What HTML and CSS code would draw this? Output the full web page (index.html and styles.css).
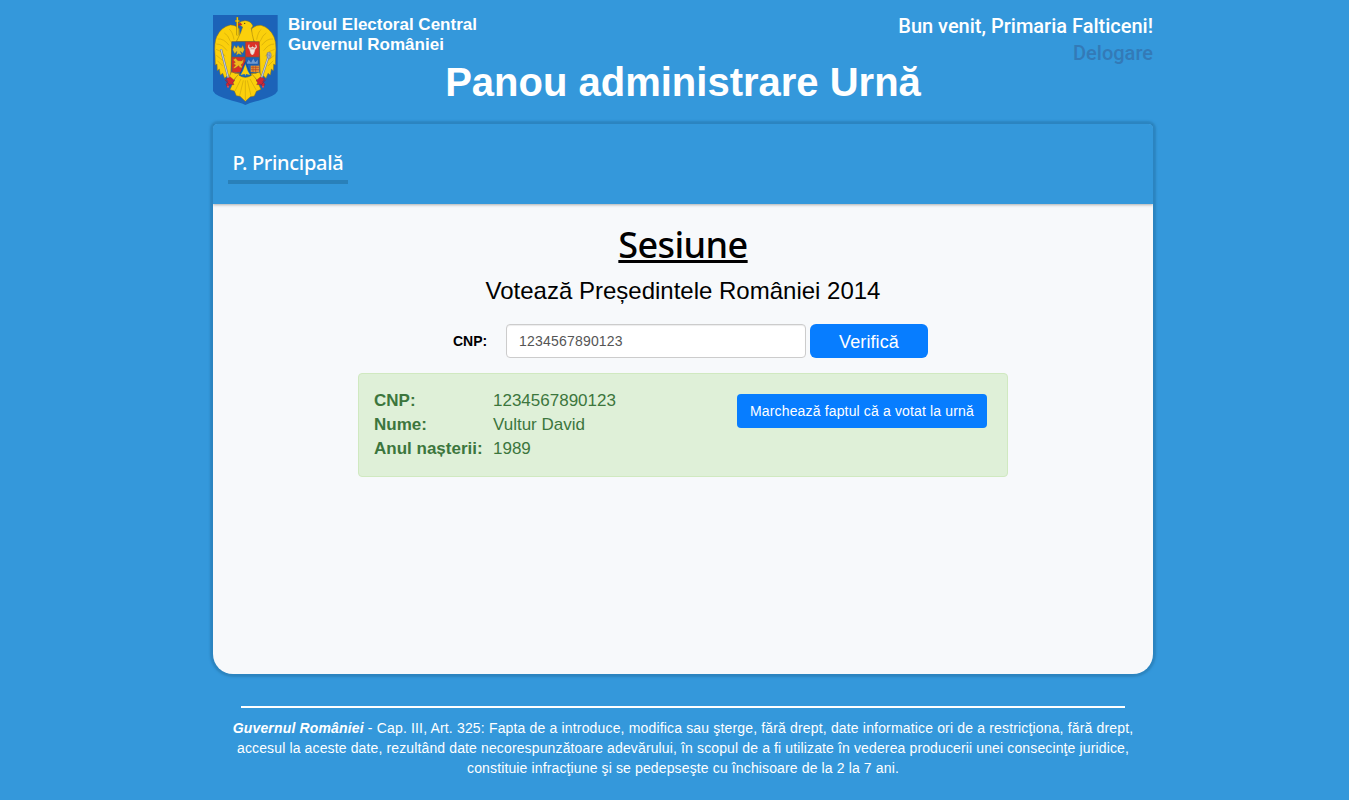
FILE: index.html
```html
<!DOCTYPE html>
<html lang="ro">
<head>
<meta charset="utf-8">
<title>Panou administrare Urnă</title>
<link rel="stylesheet" href="styles.css">
</head>
<body>
<div class="page">
  <header class="header">
    <svg class="crest" viewBox="24 21 195 270" aria-label="Stema României">
      <path d="M24 21H218V249Q211 265 160 278Q135 283 121 291Q107 283 82 278Q31 265 24 249Z" fill="#1c63b8"/>
      <g fill="#fbd00b" stroke="#94750e" stroke-width="1.5" stroke-linejoin="round">
        <path d="M103 62Q90 50 76 51Q48 57 35 86Q27 105 30 139L31 171L36 168L37 188L43 183L46 201L53 196L59 211L67 203L77 207L80 116L105 88Z"/>
        <path d="M140 62Q153 50 168 52Q194 59 207 87Q215 106 212 139L211 171L206 168L205 188L199 183L196 201L189 196L183 211L175 203L166 207L163 116L138 88Z"/>
        <path d="M99 47Q109 37 121 38Q138 39 144 54L139 61L142 80L147 101H94L107 74L113 57Z"/>
        <path d="M97 196L75 245L88 249L94 263L105 265L121 280L136 266L148 264L154 250L168 244L145 196Z"/>
        <path d="M79 192L69 214L82 221L103 196ZM163 192L173 214L160 221L139 196Z"/>
      </g>
      <g fill="none" stroke="#b18a0b" stroke-width="1.2">
        <path d="M38 93Q57 91 72 112M34 108Q52 108 66 128M33 124Q49 126 61 145M34 142L54 158M37 158L53 174M58 75Q68 79 77 101M73 64Q83 71 87 95M204 93Q185 91 170 112M208 108Q190 108 176 128M209 124Q193 126 181 145M208 142L188 158M205 158L189 174M184 75Q174 79 165 101M169 64Q159 71 155 95"/>
        <path d="M108 213L90 249M115 217L104 263M121 217V276M127 217L138 263M135 213L154 247"/>
      </g>
      <path d="M94 49L107 44L112 50L101 53Z" fill="#c62b27"/>
      <circle cx="119" cy="46" r="2" fill="#3d3418"/>
      <path d="M97 27V82M90 39H104" fill="none" stroke="#8e7413" stroke-width="6"/>
      <path d="M97 28V81M91 39H103" fill="none" stroke="#fbd00b" stroke-width="3.5"/>
      <path d="M80 101H121V147H80Z" fill="#1763bd"/>
      <path d="M121 101H163V147H121Z" fill="#dc3028"/>
      <path d="M80 147H121V193H80Z" fill="#d92e27"/>
      <path d="M121 147H163V193H121Z" fill="#1763bd"/>
      <path d="M80 101H163V178Q163 191 154 196H132L121 205L110 196H89Q80 191 80 178ZM80 147H163M121 101V197" fill="none" stroke="#755b37" stroke-width="2"/>
      <path d="M99 112L103 118L109 120L113 112L118 125L113 136L106 130L110 141L101 137L94 142L96 130L89 137L83 125L88 112L94 120Z" fill="#e5bf22" stroke="#735f2e"/>
      <path d="M132 110Q127 120 135 124L139 121L146 121L150 124Q158 119 152 110L154 118L147 120L143 116L138 120L131 117ZM134 124H150L146 137L142 141L138 137Z" fill="#eee6df" stroke="#e6d5cf" stroke-width="2"/>
      <path d="M84 155L92 151L99 158L110 159L116 152L114 165L108 170L113 179H105L101 173L90 181H84L92 171L85 168L91 163Z" fill="#f1b71d" stroke="#7e5322"/>
      <path d="M125 164L131 154L138 163L145 150L151 162L159 154V168H125Z" fill="#6f9bd0" stroke="#183e83"/>
      <path d="M137 173H163V192H137Z" fill="#e39431"/>
      <path d="M138 178H162M138 185H162M144 173V192M152 173V192" stroke="#b74226" stroke-width="2"/>
      <path d="M121 161L103 202Q121 213 139 202Z" fill="#1769bd" stroke="#174485" stroke-width="2"/>
      <path d="M121 169L114 188L107 201L119 198L121 204L123 198L135 201L128 188Z" fill="#fbd00b"/>
      <path d="M48 124L71 214M190 147L168 214" fill="none" stroke="#66738b" stroke-width="6"/>
      <path d="M48 124L71 214M190 147L168 214" fill="none" stroke="#c4cbd5" stroke-width="3.5"/>
      <ellipse cx="192" cy="142" rx="7" ry="10" fill="#a8afba" stroke="#545e70"/>
      <path d="M186 139L198 145M188 134V149M194 133V151" stroke="#687286"/>
      <path d="M63 212L76 207L89 218L83 223L87 230L74 229L67 238L63 228L69 222ZM179 212L166 207L153 218L159 223L155 230L168 229L175 238L180 228L173 222Z" fill="#d12632" stroke="#75233b"/>
      <path d="M60 215L75 233M182 215L167 233" stroke="#8b2742" stroke-width="3"/>
      <circle cx="69" cy="236" r="3" fill="#e24b4f"/><circle cx="174" cy="236" r="3" fill="#e24b4f"/>
    </svg>
    <div class="org">Biroul Electoral Central<br>Guvernul României</div>
    <div class="user"><div>Bun venit, Primaria Falticeni!</div><a class="logout">Delogare</a></div>
    <h1 class="title">Panou administrare Urnă</h1>
  </header>
  <main class="panel">
    <nav class="nav"><a class="nav-link"><span class="nav-text">P. Principală</span></a></nav>
    <section class="content">
      <h2 class="heading"><span class="heading-text">Sesiune</span></h2>
      <p class="subtitle">Votează Președintele României 2014</p>
      <form class="search">
        <label class="label" for="cnp">CNP:</label>
        <input class="input" id="cnp" value="1234567890123">
        <button class="verify" type="button">Verifică</button>
      </form>
      <div class="result">
        <dl class="details">
          <dt>CNP:</dt><dd>1234567890123</dd>
          <dt>Nume:</dt><dd>Vultur David</dd>
          <dt>Anul nașterii:</dt><dd>1989</dd>
        </dl>
        <button class="mark" type="button">Marchează faptul că a votat la urnă</button>
      </div>
    </section>
  </main>
  <footer class="footer">
    <div class="legal legal-first"><strong><em>Guvernul României</em></strong> - Cap. III, Art. 325: Fapta de a introduce, modifica sau şterge, fără drept, date informatice ori de a restricţiona, fără drept,</div>
    <div class="legal">accesul la aceste date, rezultând date necorespunzătoare adevărului, în scopul de a fi utilizate în vederea producerii unei consecinţe juridice,</div>
    <div class="legal">constituie infracţiune şi se pedepseşte cu închisoare de la 2 la 7 ani.</div>
  </footer>
</div>
</body>
</html>
```
FILE: styles.css
```css
* { box-sizing: border-box; }
body { margin: 0; background: #3498db; color: #000; font: 14px/20px "Liberation Sans", Arial, sans-serif; }
.page { width: 940px; height: 800px; margin-left: 213px; }
.header { height: 124px; padding-top: 15px; display: grid; grid-template-columns: 65px 1fr auto; grid-template-rows: 45px 64px; column-gap: 10px; color: #fff; }
.crest { width: 65px; height: 90px; grid-column: 1; grid-row: 1 / 3; }
.org { font-size: 17px; font-weight: bold; line-height: 20px; grid-column: 2; grid-row: 1; white-space: nowrap; }
.user { font: 500 20px/27px Roboto, sans-serif; text-align: right; grid-column: 3; grid-row: 1; margin-top: -2px; white-space: nowrap; }
.logout { color: #337ab7; }
.title { grid-column: 1 / 4; grid-row: 2; margin: 0; text-align: center; font-size: 40px; line-height: 45px; }
.panel { height: 550px; border-radius: 5px 5px 20px 20px; background: #f7f9fb; box-shadow: 0 0 2px 3px rgba(41,128,185,.8); }
.nav { height: 80px; background: #3498db; border-radius: 4px 4px 0 0; padding: 21px 15px 0; box-shadow: 0 1px 3px rgba(0,0,0,.3); clip-path: inset(0 0 -5px 0); }
.nav-link { display: flex; width: 120px; height: 39px; border-bottom: 4px solid #2980b9; justify-content: center; color: #fff; }
.nav-text { font: 500 20px/36px "Noto Sans", sans-serif; letter-spacing: -.3px; white-space: nowrap; }
.content { padding-top: 21px; }
.heading { margin: 0; text-align: center; font: 550 36px/40px "Noto Sans", sans-serif; }
.heading-text { letter-spacing: -.6px; text-decoration: underline; text-decoration-thickness: 3px; text-underline-offset: 2px; text-decoration-skip-ink: none; }
.subtitle { margin: 11px 0 18px; font-size: 24px; line-height: 30px; text-align: center; }
.search { display: flex; align-items: center; height: 34px; margin: 0 0 15px 240px; }
.label { width: 53px; font-weight: bold; }
.input { width: 300px; height: 34px; padding: 6px 12px; border: 1px solid #ccc; border-radius: 4px; background: #fff; color: #555; font: 14px/20px "Liberation Sans", sans-serif; letter-spacing: .2px; box-shadow: inset 0 1px 1px rgba(0,0,0,.075); }
.verify, .mark { border: 0; background: #077dff; color: #fff; font-family: "Liberation Sans", sans-serif; padding: 0; white-space: nowrap; }
.verify { width: 118px; height: 34px; margin-left: 4px; padding-top: 2px; border-radius: 6px; font-size: 18px; letter-spacing: .1px; }
.result { width: 650px; height: 104px; margin-left: 145px; padding: 14px 20px 0 15px; border: 1px solid #d0e9c0; border-radius: 4px; display: flex; justify-content: space-between; background: #dff0d8; color: #3c763d; }
.details { display: grid; grid-template-columns: 119px auto; grid-auto-rows: 24px; margin: 1px 0 0; font-size: 17px; line-height: 24px; }
.details dt { font-weight: bold; white-space: nowrap; }
.details dd { margin: 0; }
.mark { width: 250px; height: 34px; margin-top: 6px; border-radius: 4px; font-size: 14px; letter-spacing: .15px; }
.footer { margin-top: 32px; color: #fff; text-align: center; white-space: nowrap; }
.footer::before { content: ""; display: block; width: 884px; height: 2px; margin: 0 auto 10px; background: #fff; }
.legal { letter-spacing: .13px; }
.legal-first { letter-spacing: .162px; }
```
